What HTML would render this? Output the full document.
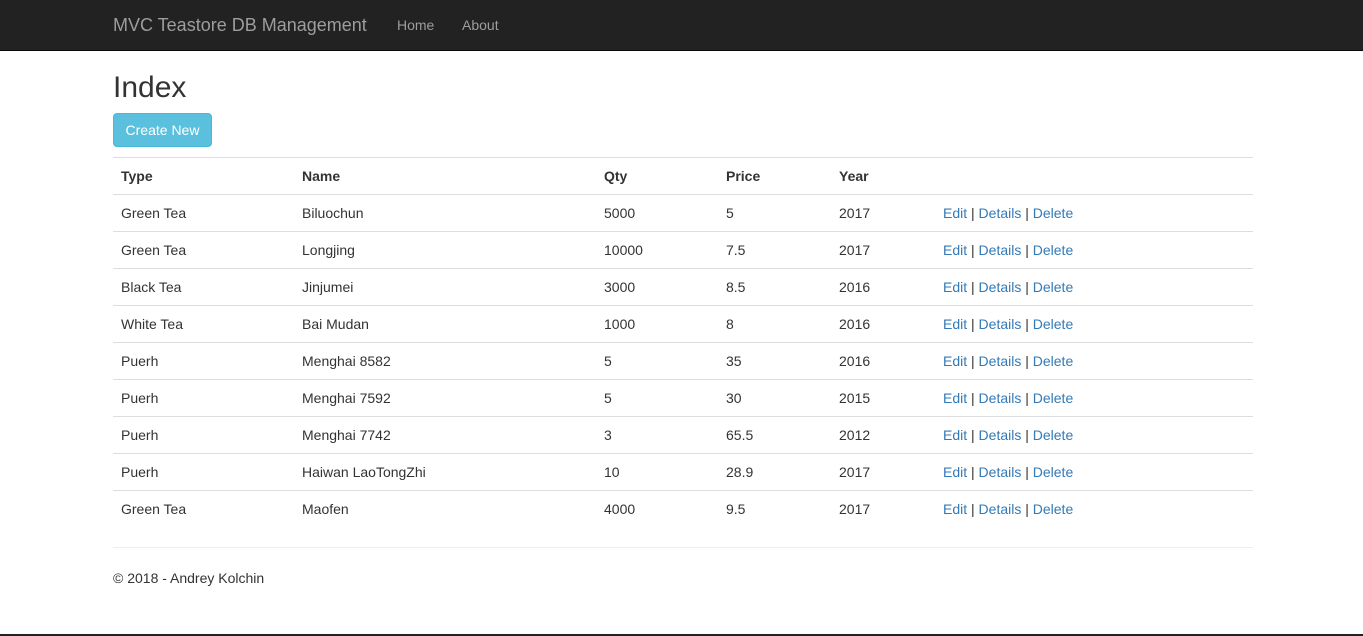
<!DOCTYPE html>
<html><head><style>
*{box-sizing:border-box}
body{margin:0;width:1363px;height:636px;overflow:hidden;font-family:"Liberation Sans",Arial,sans-serif;font-size:14px;color:#333;background:#fff;position:relative}
.nav{height:51px;background:#222;border-bottom:1px solid #080808;position:relative}
.brand{position:absolute;left:113px;top:15px;font-size:18px;color:#9d9d9d}
.nav a{position:absolute;top:17px;color:#9d9d9d;font-size:14px}
h2{position:absolute;left:113px;top:70px;margin:0;font-size:30px;font-weight:500;line-height:36px}
.btn{position:absolute;left:113px;top:113px;width:99px;height:34px;background:#5bc0de;border:1px solid #46b8da;border-radius:4px;color:#fff;font-size:14px;line-height:32px;text-align:center}
table{position:absolute;left:113px;top:157px;width:1140px;border-collapse:collapse}
td,th{height:37px;padding:0 8px;text-align:left;border-top:1px solid #ddd;vertical-align:middle}
th{font-weight:bold;border-bottom:1px solid #ddd;height:37px}
a{color:#337ab7;text-decoration:none}
hr{position:absolute;left:113px;top:547px;width:1140px;margin:0;border:0;border-top:1px solid #eee}
.foot{position:absolute;left:113px;top:570px}
.bot{position:absolute;left:0;top:634px;width:1363px;height:2px;background:#222}
</style></head><body>
<div class="nav"><span class="brand">MVC Teastore DB Management</span><a style="left:397px">Home</a><a style="left:462px">About</a></div>
<h2>Index</h2>
<div class="btn">Create New</div>
<table>
<colgroup><col style="width:181px"><col style="width:302px"><col style="width:122px"><col style="width:113px"><col style="width:104px"><col></colgroup>
<tr><th>Type</th><th>Name</th><th>Qty</th><th>Price</th><th>Year</th><th></th></tr>
<tr><td>Green Tea</td><td>Biluochun</td><td>5000</td><td>5</td><td>2017</td><td><a>Edit</a> | <a>Details</a> | <a>Delete</a></td></tr>
<tr><td>Green Tea</td><td>Longjing</td><td>10000</td><td>7.5</td><td>2017</td><td><a>Edit</a> | <a>Details</a> | <a>Delete</a></td></tr>
<tr><td>Black Tea</td><td>Jinjumei</td><td>3000</td><td>8.5</td><td>2016</td><td><a>Edit</a> | <a>Details</a> | <a>Delete</a></td></tr>
<tr><td>White Tea</td><td>Bai Mudan</td><td>1000</td><td>8</td><td>2016</td><td><a>Edit</a> | <a>Details</a> | <a>Delete</a></td></tr>
<tr><td>Puerh</td><td>Menghai 8582</td><td>5</td><td>35</td><td>2016</td><td><a>Edit</a> | <a>Details</a> | <a>Delete</a></td></tr>
<tr><td>Puerh</td><td>Menghai 7592</td><td>5</td><td>30</td><td>2015</td><td><a>Edit</a> | <a>Details</a> | <a>Delete</a></td></tr>
<tr><td>Puerh</td><td>Menghai 7742</td><td>3</td><td>65.5</td><td>2012</td><td><a>Edit</a> | <a>Details</a> | <a>Delete</a></td></tr>
<tr><td>Puerh</td><td>Haiwan LaoTongZhi</td><td>10</td><td>28.9</td><td>2017</td><td><a>Edit</a> | <a>Details</a> | <a>Delete</a></td></tr>
<tr><td>Green Tea</td><td>Maofen</td><td>4000</td><td>9.5</td><td>2017</td><td><a>Edit</a> | <a>Details</a> | <a>Delete</a></td></tr>
</table>
<hr>
<div class="foot">© 2018 - Andrey Kolchin</div>
<div class="bot"></div>
</body></html>
